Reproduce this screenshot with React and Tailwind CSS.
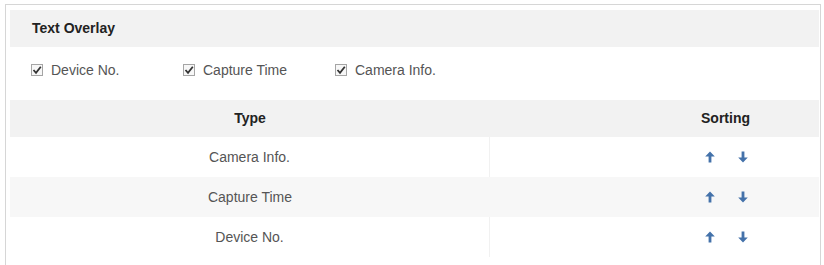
import React from "react";

function Check({ label }) {
  return (
    <div className="flex items-center w-[152px]">
      <span className="w-[12px] h-[12px] border border-[#a5a5a5] bg-[#f7f7f7] flex items-center justify-center">
        <svg width="10" height="10" viewBox="0 0 10 10">
          <path d="M1.5 5 L4 7.8 L8.8 1.8" fill="none" stroke="#333" strokeWidth="1.8" />
        </svg>
      </span>
      <span className="ml-[8px] text-[14px] text-[#555]">{label}</span>
    </div>
  );
}

function Up() {
  return (
    <svg width="10" height="12" viewBox="0 0 10 12">
      <path d="M5 0.5 L9.8 5.5 H6.4 V11.5 H3.6 V5.5 H0.2 Z" fill="#4472aa" />
    </svg>
  );
}

function Down() {
  return (
    <svg width="10" height="12" viewBox="0 0 10 12">
      <path d="M5 11.5 L9.8 6.5 H6.4 V0.5 H3.6 V6.5 H0.2 Z" fill="#4472aa" />
    </svg>
  );
}

function Row({ name, shade }) {
  return (
    <div className={`flex h-[40px] text-[14px] text-[#555] ${shade ? "bg-[#f7f7f7]" : "bg-white"}`}>
      <div className={`w-[480px] flex items-center justify-center ${shade ? "" : "border-r border-[#f1f1f1]"}`}>{name}</div>
      <div className="w-[142px]"></div>
      <div className="flex-1 flex items-center justify-center gap-[23px] pl-[2px]">
        <Up />
        <Down />
      </div>
    </div>
  );
}

export default function App() {
  return (
    <div className="w-[824px] h-[265px] bg-white pt-[4px] pl-[5px]" style={{ fontFamily: '"Liberation Sans", Arial, sans-serif' }}>
      <div className="w-[816px] h-[261px] border-t border-l border-r border-[#d6d6d6] pt-[5px] pl-[4px] pr-[1px]">
        <div className="h-[37px] bg-[#f2f2f2] flex items-center pl-[22px] text-[14px] font-bold text-[#222]">
          Text Overlay
        </div>
        <div className="h-[46px] flex items-center pl-[21px]">
          <Check label="Device No." />
          <Check label="Capture Time" />
          <Check label="Camera Info." />
        </div>
        <div className="mt-[7px]">
          <div className="flex h-[37px] bg-[#f2f2f2] text-[14px] font-bold text-[#222]">
            <div className="w-[480px] flex items-center justify-center">Type</div>
            <div className="w-[142px]"></div>
            <div className="flex-1 flex items-center justify-center">Sorting</div>
          </div>
          <Row name="Camera Info." />
          <Row name="Capture Time" shade />
          <Row name="Device No." />
        </div>
      </div>
    </div>
  );
}
